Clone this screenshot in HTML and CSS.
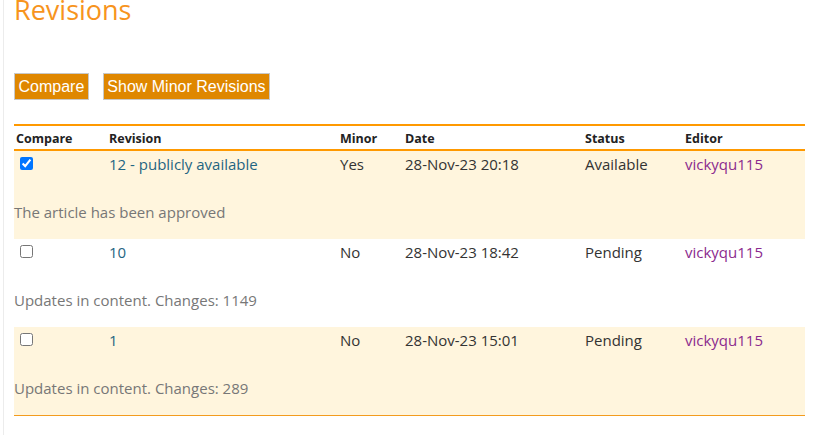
FILE: index.html
```html
<!DOCTYPE html>
<html lang="en">
<head>
    <meta charset="UTF-8">
    <title>Revisions</title>
    <link rel="stylesheet" href="styles.css">
</head>
<body>
    <div class="page">
        <h1 class="title">Revisions</h1>

        <div class="actions">
            <button class="btn">Compare</button>
            <button class="btn">Show Minor Revisions</button>
        </div>

        <table class="revisions">
            <colgroup>
                <col style="width: 93px">
                <col style="width: 231px">
                <col style="width: 65px">
                <col style="width: 180px">
                <col style="width: 100px">
                <col>
            </colgroup>
            <thead>
                <tr>
                    <th>Compare</th>
                    <th>Revision</th>
                    <th>Minor</th>
                    <th>Date</th>
                    <th>Status</th>
                    <th>Editor</th>
                </tr>
            </thead>
            <tbody class="alt">
                <tr class="main-row">
                    <td><input type="checkbox" checked></td>
                    <td><a href="#" class="rev-link">12 - publicly available</a></td>
                    <td>Yes</td>
                    <td>28-Nov-23 20:18</td>
                    <td>Available</td>
                    <td><a href="#" class="editor">vickyqu115</a></td>
                </tr>
                <tr class="note-row">
                    <td colspan="6">The article has been approved</td>
                </tr>
            </tbody>
            <tbody>
                <tr class="main-row">
                    <td><input type="checkbox"></td>
                    <td><a href="#" class="rev-link">10</a></td>
                    <td>No</td>
                    <td>28-Nov-23 18:42</td>
                    <td>Pending</td>
                    <td><a href="#" class="editor">vickyqu115</a></td>
                </tr>
                <tr class="note-row">
                    <td colspan="6">Updates in content. Changes: 1149</td>
                </tr>
            </tbody>
            <tbody class="alt last">
                <tr class="main-row">
                    <td><input type="checkbox"></td>
                    <td><a href="#" class="rev-link">1</a></td>
                    <td>No</td>
                    <td>28-Nov-23 15:01</td>
                    <td>Pending</td>
                    <td><a href="#" class="editor">vickyqu115</a></td>
                </tr>
                <tr class="note-row">
                    <td colspan="6">Updates in content. Changes: 289</td>
                </tr>
            </tbody>
        </table>
    </div>
</body>
</html>
```

FILE: styles.css
```css
* {
    margin: 0;
    padding: 0;
    box-sizing: border-box;
}

body {
    font-family: 'Open Sans', sans-serif;
    color: #333;
    background: #fff;
}

.page {
    margin-left: 3px;
    border-left: 1px solid #ececec;
    padding-left: 10px;
    height: 435px;
    overflow: hidden;
}

.title {
    font-size: 27px;
    font-weight: normal;
    color: #f7941d;
    line-height: 30px;
    margin-top: -5px;
}

.actions {
    display: flex;
    gap: 14px;
    margin-top: 48px;
}

.btn {
    font-family: 'Liberation Sans', Arial, sans-serif;
    font-size: 16px;
    color: #fff;
    background-color: #df8700;
    border: 1px solid #c8c8c8;
    height: 27px;
    padding: 0 3.5px;
    cursor: pointer;
}

.revisions {
    width: 791px;
    margin-top: 24px;
    border-collapse: separate;
    border-spacing: 0;
    table-layout: fixed;
}

.revisions th {
    text-align: left;
    font-size: 12.5px;
    font-weight: bold;
    color: #222;
    height: 27px;
    padding: 1px 0 0 2px;
    border-top: 2px solid #ff9900;
    border-bottom: 2px solid #ff9900;
}

.revisions td {
    font-size: 15px;
    padding-left: 2px;
    vertical-align: top;
}

.alt {
    background-color: #fff5dd;
}

.main-row td {
    height: 38px;
    padding-top: 3px;
}

.main-row input {
    margin: 3px 3px 3px 4px;
}

.note-row td {
    height: 50px;
    padding: 13px 0 0 0;
    color: #777;
}

.last .note-row td {
    height: 51px;
    border-bottom: 1px solid #f39c1e;
}

.rev-link {
    color: #1f6582;
    text-decoration: none;
}

.editor {
    color: #8b2a8e;
    text-decoration: none;
}
```
